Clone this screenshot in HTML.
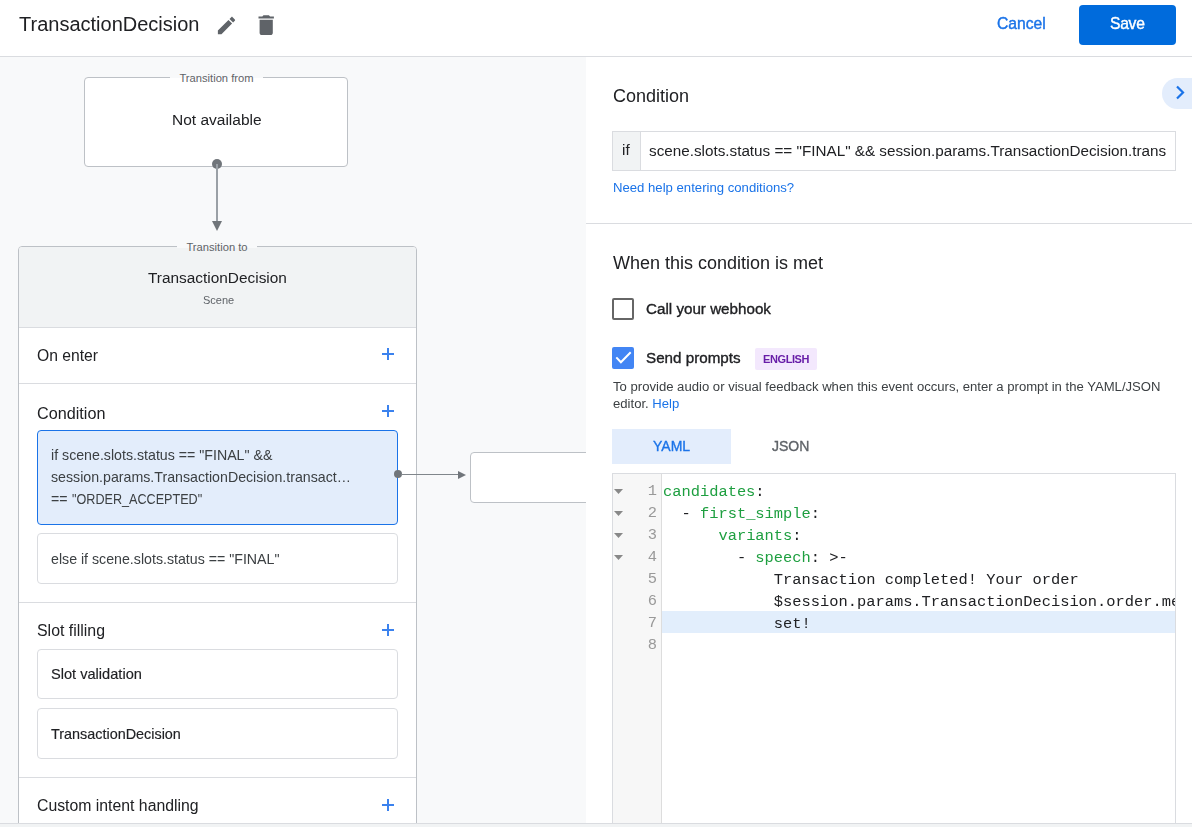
<!DOCTYPE html>
<html><head><meta charset="utf-8">
<style>
*{box-sizing:border-box;margin:0;padding:0}
html,body{width:1192px;height:827px;overflow:hidden;background:#fff;font-family:"Liberation Sans",sans-serif;color:#202124}
.a{position:absolute;white-space:pre;line-height:1;will-change:transform}
#hdr{position:absolute;left:0;top:0;width:1192px;height:57px;background:#fff;border-bottom:1px solid #dadce0}
#left{position:absolute;left:0;top:57px;width:586px;height:766px;background:#f8f9fa;overflow:hidden}
#right{position:absolute;left:586px;top:57px;width:606px;height:766px;background:#fff;overflow:hidden}
#foot{position:absolute;left:0;top:823px;width:1192px;height:4px;background:#f1f3f4;border-top:1px solid #dadce0}
.box{position:absolute;background:#fff;border:1px solid #dadce0;border-radius:4px}
.lbl{position:absolute;font-size:11px;color:#5f6368;background:#f8f9fa;padding:0 8px;line-height:12px}
.plus{position:absolute;width:12px;height:12px}
.plus:before{content:"";position:absolute;left:5px;top:0;width:2px;height:12px;background:#3b82ee}
.plus:after{content:"";position:absolute;left:0;top:5px;width:12px;height:2px;background:#3b82ee}
.sec{position:absolute;left:0;width:398px;border-top:1px solid #dadce0}
.item{position:absolute;left:18px;width:361px;background:#fff;border:1px solid #dadce0;border-radius:4px}
.code{font-family:"Liberation Mono",monospace;font-size:15.4px}
</style></head><body>
<div id="hdr">
  <div class="a" style="left:19px;top:14px;font-size:20px;color:#202124">TransactionDecision</div>
  <svg style="position:absolute;left:215.2px;top:13.9px" width="23" height="23" viewBox="0 0 24 24"><path fill="#5f6368" d="M3 17.25V21h3.75L17.81 9.94l-3.75-3.75L3 17.25zM20.71 7.04c.39-.39.39-1.02 0-1.41l-2.34-2.34c-.39-.39-1.02-.39-1.41 0l-1.83 1.83 3.75 3.75 1.83-1.83z"/></svg>
  <svg style="position:absolute;left:253px;top:11.5px" width="26.4" height="26.4" viewBox="0 0 24 24"><path fill="#5f6368" d="M6 19c0 1.1.9 2 2 2h8c1.1 0 2-.9 2-2V7H6v12zM19 4h-3.5l-1-1h-5l-1 1H5v2h14V4z"/></svg>
  <div class="a" style="left:997px;top:16px;font-size:15.7px;font-weight:400;letter-spacing:0px;-webkit-text-stroke:0.4px #1a73e8;color:#1a73e8">Cancel</div>
  <div style="position:absolute;left:1079px;top:5px;width:97px;height:40px;background:#006bdc;border-radius:4px"></div>
  <div class="a" style="left:1110px;top:16px;font-size:15.7px;font-weight:400;letter-spacing:-0.3px;-webkit-text-stroke:0.4px #fff;color:#fff">Save</div>
</div>

<div id="left">
  <!-- transition from -->
  <div class="box" style="left:84px;top:20px;width:264px;height:90px;border-color:#bdc1c6"></div>
  <div class="lbl" style="left:170px;top:15px;width:93px;text-align:center;padding:0;font-size:11.2px;background:linear-gradient(#f8f9fa 6px,#fff 6px)">Transition from</div>
  <div class="a" style="left:172px;top:55px;font-size:15.5px;color:#202124">Not available</div>
  <div style="position:absolute;left:212px;top:102px;width:10px;height:10px;border-radius:50%;background:#70757a"></div>
  <div style="position:absolute;left:216px;top:107px;width:2px;height:58px;background:#9aa0a6"></div>
  <svg style="position:absolute;left:211px;top:164px" width="12" height="11"><path d="M1 0H11L6 10z" fill="#70757a"/></svg>

  <!-- scene card -->
  <div style="position:absolute;left:18px;top:189px;width:399px;height:700px;background:#fff;border:1px solid #bdc1c6;border-radius:4px;overflow:hidden">
    <div style="position:absolute;left:0;top:0;width:398px;height:81px;background:#f1f3f4;border-bottom:1px solid #dadce0"></div>
    <div class="a" style="left:129px;top:23px;font-size:15.4px;color:#202124">TransactionDecision</div>
    <div class="a" style="left:184px;top:48px;font-size:11px;color:#5f6368">Scene</div>
    <div class="a" style="left:18px;top:101px;font-size:15.7px;color:#202124">On enter</div>
    <div class="plus" style="left:363px;top:101px"></div>
    <div class="sec" style="top:136px"></div>
    <div class="a" style="left:18px;top:158px;font-size:16.2px;color:#202124">Condition</div>
    <div class="plus" style="left:363px;top:158px"></div>
    <div class="item" style="top:183px;height:95px;background:#e3edfb;border-color:#1a73e8"></div>
    <div class="a" style="left:32px;top:197px;font-size:14.2px;line-height:22px;color:#3c4043">if scene.slots.status == "FINAL" &amp;&amp;
session.params.TransactionDecision.transact…
== <span style="display:inline-block;transform:scaleX(0.889);transform-origin:0 0">"ORDER_ACCEPTED"</span></div>
    <div class="item" style="top:286px;height:51px"></div>
    <div class="a" style="left:32px;top:305px;font-size:14.2px;color:#3c4043">else if scene.slots.status == "FINAL"</div>
    <div class="sec" style="top:355px"></div>
    <div class="a" style="left:18px;top:376px;font-size:15.9px;color:#202124">Slot filling</div>
    <div class="plus" style="left:363px;top:377px"></div>
    <div class="item" style="top:402px;height:50px"></div>
    <div class="a" style="left:32px;top:420px;font-size:14.6px;color:#202124;-webkit-text-stroke:0.15px #202124">Slot validation</div>
    <div class="item" style="top:461px;height:51px"></div>
    <div class="a" style="left:32px;top:480px;font-size:14.4px;color:#202124;-webkit-text-stroke:0.15px #202124">TransactionDecision</div>
    <div class="sec" style="top:530px"></div>
    <div class="a" style="left:18px;top:551px;font-size:15.8px;color:#202124">Custom intent handling</div>
    <div class="plus" style="left:363px;top:552px"></div>
  </div>
  <div class="lbl" style="left:177px;top:184px;width:80px;text-align:center;padding:0;font-size:11.2px;background:linear-gradient(#f8f9fa 7px,#f1f3f4 7px)">Transition to</div>
  <div style="position:absolute;left:393.7px;top:413.4px;width:8px;height:8px;border-radius:50%;background:#70757a"></div>
  <div style="position:absolute;left:401px;top:417px;width:58px;height:1.2px;background:#80868b"></div>
  <svg style="position:absolute;left:458px;top:413.5px" width="9" height="9"><path d="M0 0V8L8 4z" fill="#70757a"/></svg>
  <div class="box" style="left:470px;top:395px;width:200px;height:51px;border-color:#bdc1c6"></div>
</div>

<div id="right">
  <div class="a" style="left:27px;top:30px;font-size:18px;color:#202124">Condition</div>
  <div style="position:absolute;left:576px;top:21px;width:60px;height:31px;border-radius:16px;background:#e3edfc"></div>
  <svg style="position:absolute;left:588px;top:28.3px" width="12" height="16" viewBox="0 0 12 16"><path d="M3 1.5L9 7.5L3 13.5" fill="none" stroke="#1a73e8" stroke-width="2.2"/></svg>
  <div style="position:absolute;left:26px;top:74px;width:564px;height:40px;border:1px solid #dadce0;background:#fff"></div>
  <div style="position:absolute;left:27px;top:75px;width:28px;height:38px;background:#f1f3f4;border-right:1px solid #dadce0"></div>
  <div class="a" style="left:36px;top:85px;font-size:15.3px;color:#202124">if</div>
  <div class="a" style="left:63px;top:86px;font-size:15.26px;color:#202124">scene.slots.status == "FINAL" &amp;&amp; session.params.TransactionDecision.trans</div>
  <div class="a" style="left:27px;top:124px;font-size:13.15px;color:#1a73e8">Need help entering conditions?</div>
  <div style="position:absolute;left:0;top:166px;width:606px;height:1px;background:#dadce0"></div>
  <div class="a" style="left:27px;top:197px;font-size:18px;color:#202124">When this condition is met</div>
  <div style="position:absolute;left:26px;top:241px;width:22px;height:22px;border:2px solid #666;border-radius:2px"></div>
  <div class="a" style="left:60px;top:244px;font-size:15.2px;-webkit-text-stroke:0.35px #202124;color:#202124">Call your webhook</div>
  <div style="position:absolute;left:26px;top:290px;width:22px;height:22px;background:#4285f4;border-radius:2px"></div>
  <svg style="position:absolute;left:26px;top:290px" width="22" height="22" viewBox="0 0 22 22"><path d="M4.3 10.4L8.9 15.2L18.7 5.2" fill="none" stroke="#fff" stroke-width="2"/></svg>
  <div class="a" style="left:60px;top:293px;font-size:15.2px;-webkit-text-stroke:0.35px #202124;color:#202124">Send prompts</div>
  <div style="position:absolute;left:169px;top:291px;width:62px;height:22px;background:#f3e8fd;border-radius:2px"></div>
  <div class="a" style="left:177px;top:297px;font-size:11px;font-weight:700;letter-spacing:-0.4px;color:#681da8">ENGLISH</div>
  <div class="a" style="left:27px;top:321px;font-size:13.12px;line-height:17px;color:#3c4043">To provide audio or visual feedback when this event occurs, enter a prompt in the YAML/JSON
editor. <span style="color:#1a73e8">Help</span></div>
  <div style="position:absolute;left:26px;top:372px;width:119px;height:35px;background:#e3edfc"></div>
  <div class="a" style="left:67px;top:382px;font-size:14px;-webkit-text-stroke:0.35px #1a73e8;color:#1a73e8">YAML</div>
  <div class="a" style="left:186px;top:382px;font-size:14px;-webkit-text-stroke:0.35px #5f6368;color:#5f6368">JSON</div>
  <div style="position:absolute;left:26px;top:416px;width:564px;height:400px;border:1px solid #dadce0;background:#fff"></div>
  <div style="position:absolute;left:27px;top:417px;width:49px;height:400px;background:#f7f7f7;border-right:1px solid #ddd"></div>
  <div style="position:absolute;left:76px;top:554px;width:513px;height:22px;background:#e2eefc"></div>
  <svg style="position:absolute;left:28px;top:432px" width="9" height="6"><path d="M0 0H9L4.5 5z" fill="#888"/></svg><svg style="position:absolute;left:28px;top:454px" width="9" height="6"><path d="M0 0H9L4.5 5z" fill="#888"/></svg><svg style="position:absolute;left:28px;top:476px" width="9" height="6"><path d="M0 0H9L4.5 5z" fill="#888"/></svg><svg style="position:absolute;left:28px;top:498px" width="9" height="6"><path d="M0 0H9L4.5 5z" fill="#888"/></svg>
  <div class="a code" style="left:55px;top:423px;line-height:22px;color:#999;text-align:right;width:16px">1
2
3
4
5
6
7
8</div>
  <div class="a code" style="left:76.5px;top:424px;line-height:22px;color:#202124;width:512px;overflow:hidden"><span style="color:#1e9f40">candidates</span>:
  - <span style="color:#1e9f40">first_simple</span>:
      <span style="color:#1e9f40">variants</span>:
        - <span style="color:#1e9f40">speech</span>: &gt;-
            Transaction completed! Your order
            $session.params.TransactionDecision.order.merchantOrderId is all
            set!
</div>
</div>
<div id="foot"></div>
</body></html>
